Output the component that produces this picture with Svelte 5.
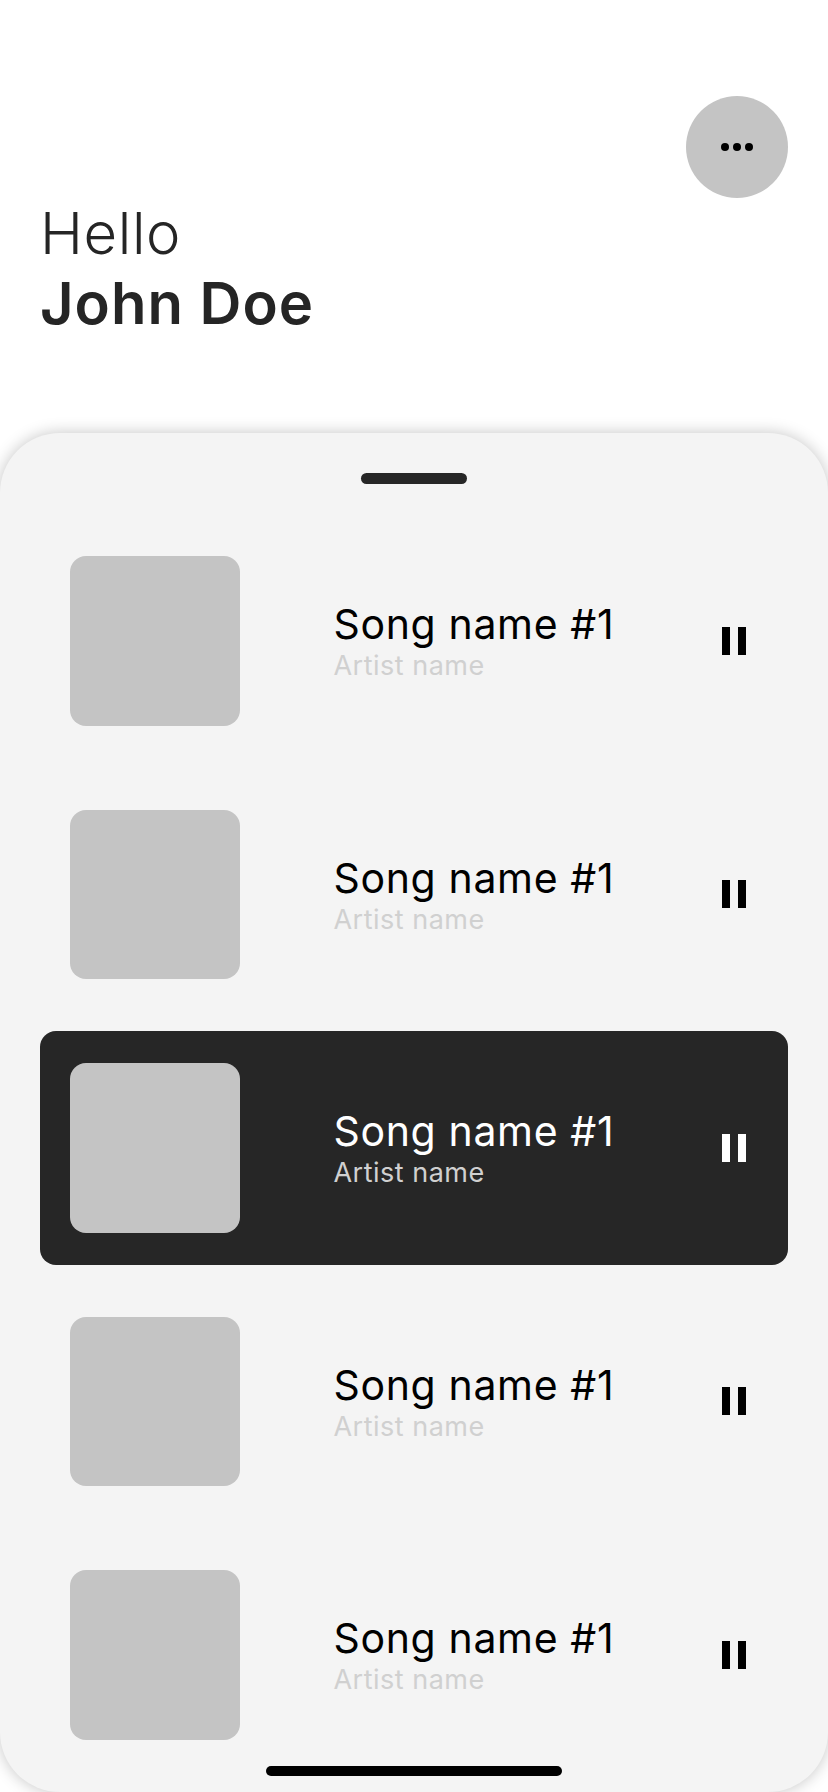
<script>
  const songs = [1, 2, 3, 4, 5].map((id) => ({
    id,
    title: 'Song name #1',
    artist: 'Artist name',
    active: id === 3
  }));
</script>

<main class="screen">
  <header class="header">
    <button class="more" aria-label="More">
      <svg width="32" height="8" viewBox="0 0 32 8">
        <circle cx="4" cy="4" r="4" />
        <circle cx="16" cy="4" r="4" />
        <circle cx="28" cy="4" r="4" />
      </svg>
    </button>
    <h1 class="greeting">
      <span class="hello">Hello</span>
      <span class="name">John Doe</span>
    </h1>
  </header>

  <section class="sheet">
    <div class="handle"></div>
    <ul class="songs">
      {#each songs as song (song.id)}
        <li class="song" class:active={song.active}>
          <div class="art"></div>
          <div class="info">
            <span class="title">{song.title}</span>
            <span class="artist">{song.artist}</span>
          </div>
          <svg class="pause" width="24" height="28" viewBox="0 0 24 28">
            <rect width="8" height="28" />
            <rect x="16" width="8" height="28" />
          </svg>
        </li>
      {/each}
    </ul>
    <div class="home"></div>
  </section>
</main>

<style>
  :global(body) {
    margin: 0;
    background: #fff;
  }
  .screen {
    box-sizing: border-box;
    width: 828px;
    height: 1792px;
    overflow: hidden;
    display: flex;
    flex-direction: column;
    background: #fff;
    font-family: Inter, sans-serif;
    font-optical-sizing: none;
  }
  .header {
    box-sizing: border-box;
    height: 433.3px;
    flex: none;
    padding: 96px 40px 0;
    display: flex;
    flex-direction: column;
  }
  .more {
    align-self: flex-end;
    width: 102px;
    height: 102px;
    padding: 0;
    border: 0;
    border-radius: 50%;
    background: #c4c4c4;
    display: flex;
    align-items: center;
    justify-content: center;
  }
  .greeting {
    margin: 0;
    display: flex;
    flex-direction: column;
    font-size: 58px;
    line-height: 70px;
    color: #252525;
  }
  .hello {
    font-weight: 300;
    letter-spacing: 0.6px;
  }
  .name {
    font-weight: 600;
    letter-spacing: 1px;
  }
  .sheet {
    position: relative;
    box-sizing: border-box;
    height: 1358.7px;
    flex: none;
    padding: 40px 40px 0;
    display: flex;
    flex-direction: column;
    align-items: center;
    border-radius: 60px;
    background: #f4f4f4;
    box-shadow: 0 0 16px rgba(0, 0, 0, 0.23);
  }
  .handle {
    width: 106px;
    height: 10.5px;
    border-radius: 6px;
    background: #262626;
  }
  .songs {
    list-style: none;
    margin: 40.5px 0 0;
    padding: 0;
    width: 100%;
    display: flex;
    flex-direction: column;
    gap: 20.1px;
  }
  .song {
    box-sizing: border-box;
    height: 233.4px;
    padding: 0 42px 0 30px;
    display: flex;
    align-items: center;
    border-radius: 16px;
    color: #000;
  }
  .art {
    width: 169.8px;
    height: 169.8px;
    flex: none;
    border-radius: 16px;
    background: #c4c4c4;
  }
  .info {
    flex: 1;
    margin-left: 93.7px;
    display: flex;
    flex-direction: column;
    white-space: nowrap;
  }
  .title {
    font-size: 41px;
    line-height: 50px;
    letter-spacing: 0.65px;
  }
  .artist {
    font-size: 27px;
    line-height: 33px;
    letter-spacing: 0.5px;
    color: #d0d0d0;
  }
  .pause {
    flex: none;
    fill: currentColor;
  }
  .active {
    background: #262626;
    color: #fff;
  }
  .home {
    position: absolute;
    left: 266px;
    bottom: 16px;
    width: 296px;
    height: 10px;
    border-radius: 5px;
    background: #000;
  }
</style>
